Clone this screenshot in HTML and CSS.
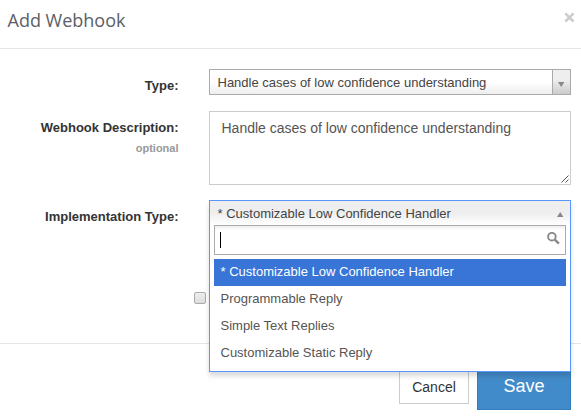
FILE: index.html
```html
<!DOCTYPE html>
<html lang="en">
<head>
<meta charset="utf-8">
<title>Add Webhook</title>
<link rel="stylesheet" href="styles.css">
</head>
<body>
<div class="modal">
  <header class="modal-header">
    <h1 class="title">Add Webhook</h1>
    <span class="close"><svg width="11" height="11" viewBox="0 0 11 11"><path d="M1.3 1.3 9.5 9.5M9.5 1.3 1.3 9.5" stroke="#ccc" stroke-width="2.5" fill="none"/></svg></span>
  </header>
  <main class="modal-body">
    <div class="row row-type">
      <div class="label">Type:</div>
      <div class="select">
        <span class="select-text">Handle cases of low confidence understanding</span>
        <span class="select-arrow"><svg width="7" height="5" viewBox="0 0 7 5"><path d="M0 0h6.4L3.2 5z" fill="#888"/></svg></span>
      </div>
    </div>
    <div class="row row-description">
      <div class="label">Webhook Description:<small class="optional">optional</small></div>
      <div class="textarea">Handle cases of low confidence understanding
        <svg class="grip" width="8" height="8" viewBox="0 0 8 8"><path d="M.5 7.5l7-7M4.5 7.5l3-3" stroke="#555" fill="none"/></svg>
      </div>
    </div>
    <div class="row row-implementation">
      <div class="label">Implementation Type:</div>
      <div class="dropdown-anchor">
        <div class="dropdown">
          <div class="dropdown-head">
            <span>* Customizable Low Confidence Handler</span>
            <svg class="arrow-up" width="7" height="5" viewBox="0 0 7 5"><path d="M0 5h6.4L3.2 0z" fill="#888"/></svg>
          </div>
          <div class="search">
            <span class="caret"></span>
            <svg width="13" height="13" viewBox="0 0 13 13"><circle cx="4.9" cy="4.7" r="3.8" stroke="#888" stroke-width="1.9" fill="none"/><path d="M7.8 7.6l4.1 4" stroke="#888" stroke-width="2.4" fill="none"/></svg>
          </div>
          <ul class="options">
            <li class="option active">* Customizable Low Confidence Handler</li>
            <li class="option">Programmable Reply</li>
            <li class="option">Simple Text Replies</li>
            <li class="option">Customizable Static Reply</li>
          </ul>
        </div>
      </div>
    </div>
    <div class="check-row"><span class="checkbox"></span></div>
  </main>
  <footer class="modal-footer">
    <div class="button cancel">Cancel</div>
    <div class="button save">Save</div>
  </footer>
</div>
</body>
</html>
```

FILE: styles.css
```css
* { box-sizing: border-box; }
body {
  margin: 0;
  background: #fff;
  color: #333;
  font: 13px/18px "Liberation Sans", Arial, sans-serif;
  overflow: hidden;
}
svg { display: block; }
.modal { width: 581px; height: 419px; }
.modal-header {
  display: flex;
  justify-content: space-between;
  height: 49px;
  padding: 8px 6px 0 7.5px;
  border-bottom: 1px solid #e5e5e5;
}
.title {
  margin: 0;
  color: #5b6066;
  font: 400 18px/25px "Open Sans", sans-serif;
}
.close { padding-top: 4px; }
.modal-body {
  height: 294px;
  padding: 20px 10px 0 0;
}
.row {
  display: grid;
  grid-template-columns: 178.5px 362px;
  column-gap: 30.5px;
}
.row-type { height: 42px; }
.row-description { height: 89px; }
.row-implementation { height: 92px; }
.label {
  padding-top: 8px;
  text-align: right;
  font-weight: bold;
}
.optional {
  display: block;
  margin-top: 2px;
  color: #999;
  font-size: 11px;
}
.select {
  display: flex;
  height: 26px;
  border: 1px solid #aaa;
  background: linear-gradient(#fff 50%, #eee);
  color: #444;
}
.select-text {
  flex: 1;
  padding-left: 7.5px;
  line-height: 26px;
}
.select-arrow {
  width: 18px;
  padding: 12px 0 0 5px;
  border-left: 1px solid #aaa;
  background: linear-gradient(#eee 40%, #ccc);
}
.textarea {
  position: relative;
  height: 74px;
  padding: 6px 11.5px;
  border: 1px solid #ccc;
  color: #555;
  font-size: 14px;
  line-height: 20px;
}
.grip {
  position: absolute;
  right: 1px;
  bottom: 1px;
}
.dropdown-anchor { position: relative; }
.dropdown {
  position: absolute;
  top: 0;
  left: 0;
  z-index: 2;
  width: 362px;
  height: 172px;
  padding: 0 4px;
  border: 1px solid #5897fb;
  background: #fff;
  box-shadow: 0 4px 5px rgba(0, 0, 0, .15);
}
.dropdown-head {
  display: flex;
  justify-content: space-between;
  height: 24px;
  margin: 0 -4px;
  padding: 0 6px 0 7.5px;
  background: linear-gradient(#eee 50%, #fff);
  color: #444;
  line-height: 25px;
}
.arrow-up { margin-top: 11px; }
.search {
  display: flex;
  justify-content: space-between;
  height: 30px;
  padding: 6px 5px;
  border: 1px solid #aaa;
  background: linear-gradient(#eee 1%, #fff 15%);
}
.caret {
  width: 1px;
  height: 16px;
  background: #000;
}
.options {
  margin: 4px 0 0;
  padding: 0;
  list-style: none;
}
.option {
  height: 27px;
  padding-left: 6.5px;
  color: #555;
  line-height: 26px;
}
.option.active {
  background: #3875d7;
  color: #fff;
}
.check-row { padding-left: 194px; }
.checkbox {
  display: block;
  width: 12px;
  height: 12px;
  border: 1px solid #aaa;
  border-radius: 2px;
  background: linear-gradient(#eee, #ddd);
}
.modal-footer {
  display: flex;
  justify-content: flex-end;
  align-items: center;
  gap: 8px;
  height: 76px;
  padding: 10px 10px 0 0;
  border-top: 1px solid #e5e5e5;
}
.button { text-align: center; }
.cancel {
  width: 70px;
  height: 34px;
  border: 1px solid #ccc;
  font-size: 14px;
  line-height: 32px;
}
.save {
  width: 94px;
  height: 46px;
  border: 1px solid #357ebd;
  background: #428bca;
  color: #fff;
  font-size: 18px;
  line-height: 43px;
}
```
